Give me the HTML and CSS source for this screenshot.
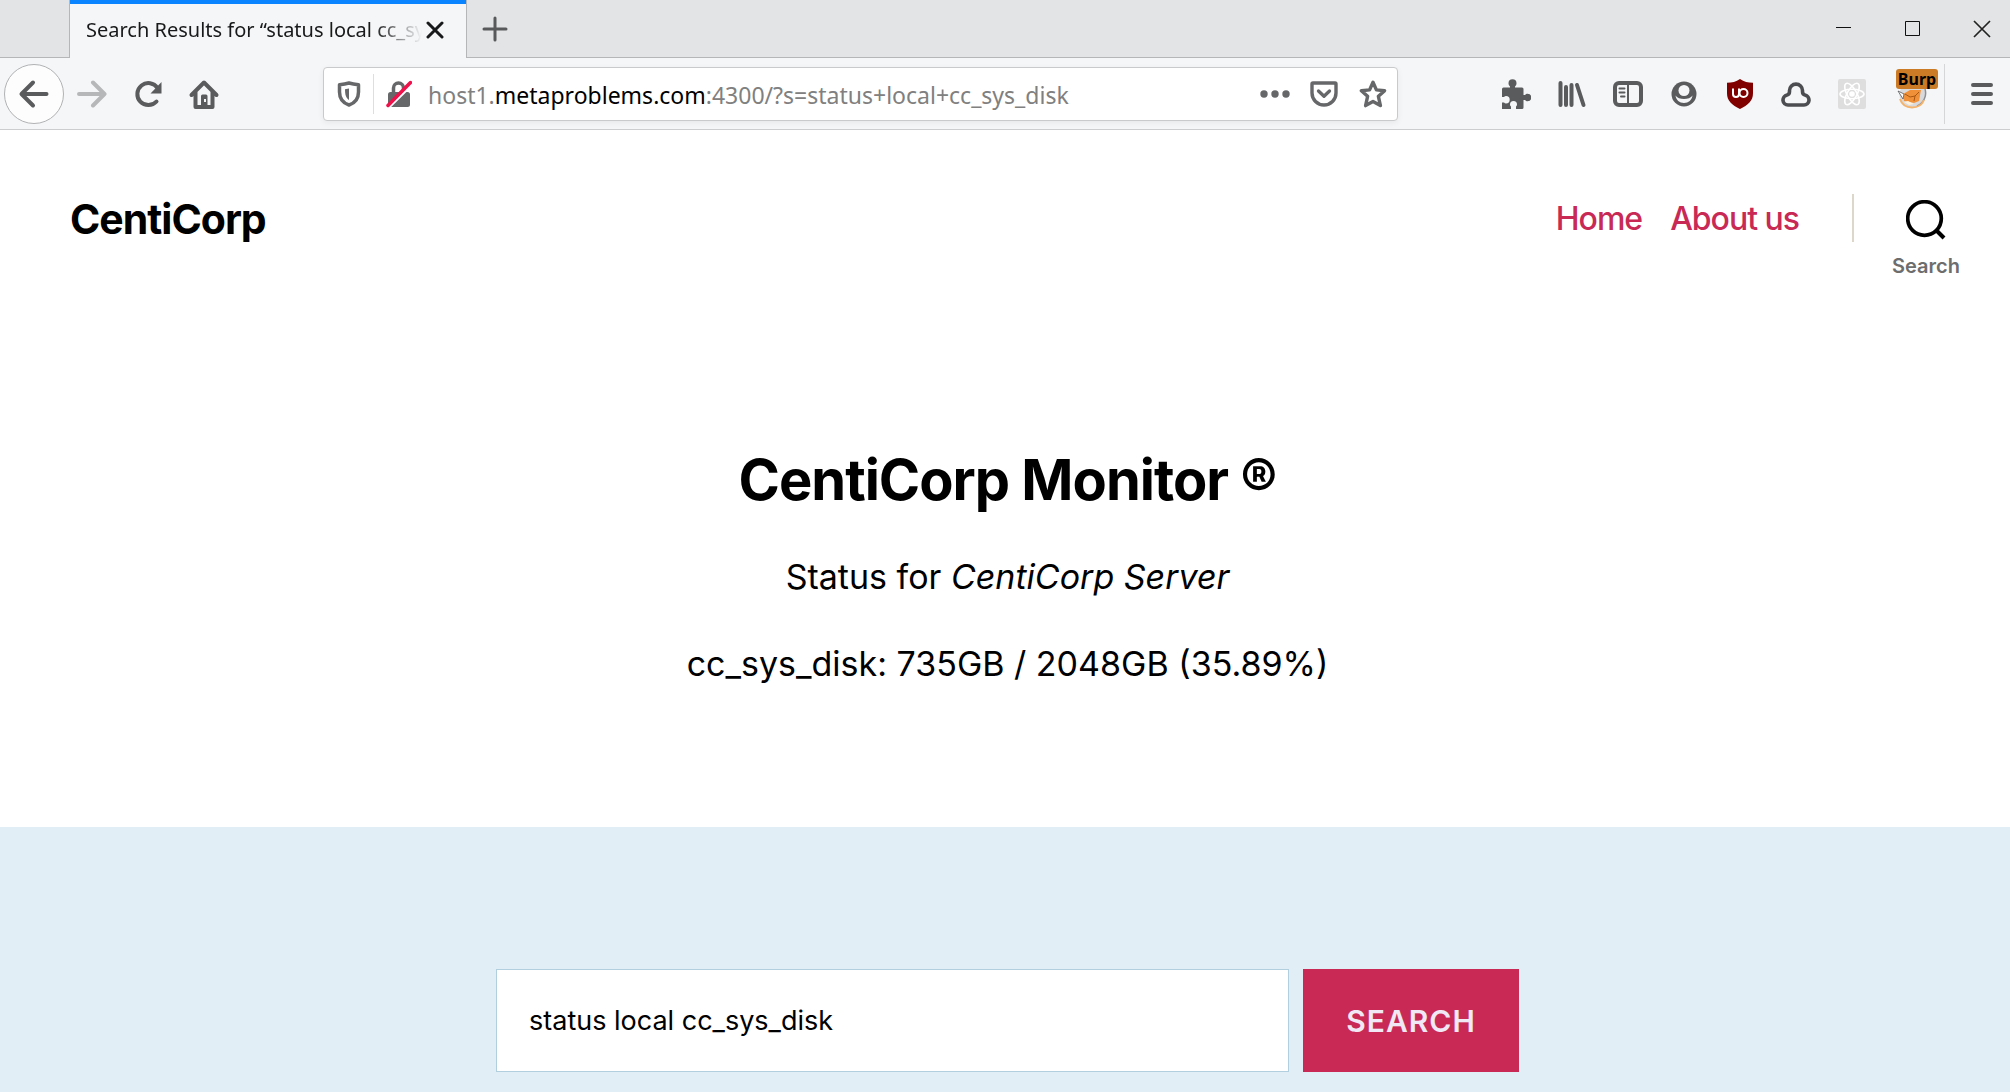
FILE: index.html
```html
<!DOCTYPE html>
<html lang="en">
<head>
<meta charset="utf-8">
<title>Search Results for “status local cc_sys_disk”</title>
<link rel="stylesheet" href="styles.css">
</head>
<body>
<div class="browser">
  <div class="tabstrip">
    <div class="tab">
      <span class="tab-title">Search Results for “status local cc_sy</span>
      <button class="tab-close" aria-label="Close tab"><svg width="18" height="18" viewBox="0 0 18 18"><path d="M2 2l14 14M16 2L2 16" stroke="#18191a" stroke-width="3" stroke-linecap="round"/></svg></button>
    </div>
    <button class="new-tab" aria-label="New tab"><svg width="26" height="26" viewBox="0 0 26 26"><path d="M13 2v22M2 13h22" stroke="#58595b" stroke-width="3" stroke-linecap="round"/></svg></button>
    <div class="window-controls">
      <button aria-label="Minimize"><svg width="16" height="16" viewBox="0 0 16 16"><path d="M0 6.500h15" stroke="#111"/></svg></button>
      <button aria-label="Maximize"><svg width="16" height="16" viewBox="0 0 16 16"><path d="M.5 .5h14v14H.5z" fill="none" stroke="#111"/></svg></button>
      <button aria-label="Close"><svg width="18" height="18" viewBox="0 0 18 18"><path d="M1 1l16 16M17 1L1 17" stroke="#222" stroke-width="1.700"/></svg></button>
    </div>
  </div>

  <div class="toolbar">
    <button class="back" aria-label="Back"><svg width="32" height="32" viewBox="0 0 32 32"><path d="M28.500 16H4M15 4.500L3.500 16L15 27.500" class="line"/></svg></button>
    <button class="tool faded" aria-label="Forward"><svg width="32" height="32" viewBox="0 0 32 32"><path d="M3 16h25M17 4.500L28.500 16L17 27.500" class="line"/></svg></button>
    <button class="tool" aria-label="Reload"><svg width="32" height="32" viewBox="0 0 32 32"><path d="M24.500 23.500A11 11 0 1 1 25.500 10" class="line"/><path d="M29.500 4v11.500H18.500z" class="solid"/></svg></button>
    <button class="tool" aria-label="Home"><svg width="32" height="32" viewBox="0 0 32 32"><path d="M3.500 17L16 4.500L28.500 17M7.500 14v15h17V14" class="line"/><path d="M13 29v-11a1.500 1.500 0 0 1 1.500-1.500h3.500a1.500 1.500 0 0 1 1.500 1.500v11z" class="solid"/><path d="M16 21h2v3h-2z" fill="#f5f6f7"/></svg></button>

    <div class="urlbar">
      <button class="url-icon shield" aria-label="Tracking protection"><svg width="24" height="26" viewBox="0 0 24 26"><path d="M12 2C8.500 3 5.500 3.400 2.500 3.700V11c0 6 3.500 11 9.500 13 6-2 9.500-7 9.500-13V3.700C18.500 3.400 15.500 3 12 2z" fill="none" stroke="#666769" stroke-width="3.500" stroke-linejoin="round"/><path d="M12 7.500v11.500c-3-2-4-5-4-10.800z" fill="#666769"/></svg></button>
      <button class="url-icon lock" aria-label="Connection is not secure"><svg width="26" height="28" viewBox="0 0 26 28"><path d="M7.500 13V8a5 5 0 0 1 10 0v5" fill="none" stroke="#666769" stroke-width="3.500"/><rect x="2" y="12" width="22" height="15" rx="2.500" fill="#666769"/><path d="M1.500 28.500L26.500 4" stroke="#fff" stroke-width="3"/><path d="M2 25.500L24.500 2.500" stroke="#f0104a" stroke-width="3.500" stroke-linecap="round"/></svg></button>
      <div class="url" role="textbox" aria-label="Address"><span>host1.</span><b>metaproblems.com</b><span>:4300/?s=status+local+cc_sys_disk</span></div>
      <div class="url-actions">
        <button aria-label="Page actions"><svg width="30" height="8" viewBox="0 0 30 8"><g fill="#666769"><circle cx="4" cy="4" r="3.700"/><circle cx="15" cy="4" r="3.700"/><circle cx="26" cy="4" r="3.700"/></g></svg></button>
        <button aria-label="Save to Pocket"><svg width="28" height="26" viewBox="0 0 28 26"><path d="M3 2h22a1 1 0 0 1 1 1v9a12 12 0 0 1-24 0V3a1 1 0 0 1 1-1z" fill="none" stroke="#666769" stroke-width="3.400"/><path d="M8.500 10l5.500 5.300L19.500 10" fill="none" stroke="#666769" stroke-width="3.300" stroke-linecap="round" stroke-linejoin="round"/></svg></button>
        <button aria-label="Bookmark this page"><svg width="28" height="28" viewBox="0 0 28 28"><path d="M14 2.300l3.400 7.600 8.200.8-6.200 5.600 2 9.300L14 21.500l-7.400 4.100 2-9.300L2.400 10.700l8.200-.8z" fill="none" stroke="#666769" stroke-width="3.400" stroke-linejoin="round"/></svg></button>
      </div>
    </div>

    <button class="tool" aria-label="Extensions"><svg width="30" height="30" viewBox="0 0 30 30"><path d="M1 10a1.500 1.500 0 0 1 1.500-1.500H9V7.500C8 6.500 7.500 5.500 7.500 4.200a4 4 0 0 1 8 0c0 1.300-.5 2.300-1.500 3.300v1h7A1.500 1.500 0 0 1 22.500 10v6h1.500c.8-.9 1.500-1.300 2.500-1.300a3.800 3.800 0 0 1 0 7.600c-1 0-1.700-.4-2.500-1.300h-1.500v7.500A1.500 1.500 0 0 1 21 30h-6v-2.500c.8-.6 1-1.200 1-2a3.500 3.500 0 0 0-7 0c0 .8.200 1.400 1 2V30H1v-6.500h2c.6.700 1.200 1 2 1a3.700 3.700 0 0 0 0-7.400c-.8 0-1.400.3-2 1H1z" class="solid"/></svg></button>
    <button class="tool" aria-label="Library"><svg width="30" height="30" viewBox="0 0 30 30"><path d="M3.500 4v22M9 8v18M14.500 6v20M20 6l6.500 20" class="line"/></svg></button>
    <button class="tool" aria-label="Sidebars"><svg width="30" height="30" viewBox="0 0 30 30"><rect x="2" y="4" width="26" height="22" rx="4" class="line"/><path d="M15 4v22" stroke="#5a5b5d" stroke-width="2"/><path d="M6.500 9.500h5M6.500 13.500h5M8 17.500h3.500" stroke="#5a5b5d" stroke-width="2" stroke-linecap="round"/></svg></button>
    <button class="tool" aria-label="Account"><svg width="26" height="26" viewBox="0 0 26 26"><circle cx="13" cy="13" r="12.500" class="solid"/><circle cx="13" cy="9.500" r="5.500" fill="#f5f6f7"/><path d="M4.500 14.500c1.500 2.500 5 3.500 8.500 3.500s7-1 8.500-3.500c-.5 4.500-4 7.500-8.500 7.500s-8-3-8.500-7.500z" fill="#f5f6f7"/></svg></button>
    <button class="tool" aria-label="uBlock Origin"><svg width="28" height="30" viewBox="0 0 28 30"><path d="M14 0c4 3 8 3.600 13 3.800v10.500C27 22 22 26 14 30 6 26 1 22 1 14.300V3.800C6 3.600 10 3 14 0z" fill="#800000"/><path d="M7 9.500v5.500a3 3 0 0 0 6 0V9.500" fill="none" stroke="#fff" stroke-width="2"/><circle cx="17.500" cy="14" r="4" fill="none" stroke="#fff" stroke-width="2"/></svg></button>
    <button class="tool" aria-label="Cloud"><svg width="30" height="28" viewBox="0 0 30 28"><path d="M7 25a5 5 0 0 1-1-9.900c1.500-.4 2.500-1.500 2.500-3.500v-1a6.500 6.500 0 0 1 13 0v1c0 2 1 3.100 2.500 3.500a5 5 0 0 1-1 9.900z" fill="none" stroke="#4c4d50" stroke-width="3.600"/></svg></button>
    <button class="tool" aria-label="React Developer Tools"><svg width="28" height="30" viewBox="0 0 28 30"><rect width="28" height="30" rx="2" fill="#dedede"/><g transform="translate(14 15)" fill="none" stroke="#fff" stroke-width="1.600"><ellipse rx="12" ry="4.700"/><ellipse rx="12" ry="4.700" transform="rotate(60)"/><ellipse rx="12" ry="4.700" transform="rotate(120)"/><circle r="2" fill="#fff"/></g></svg></button>
    <button class="tool foxy" aria-label="FoxyProxy: Burp">
      <svg width="30" height="30" viewBox="0 0 30 30"><circle cx="15.500" cy="15.500" r="13" fill="#d9d9dc"/><path d="M28 10a14 14 0 0 1-8 17" fill="none" stroke="#8d8e92" stroke-width="1.500"/><path d="M3 20c2 6 7 8.500 12 8.500S25 26 27 21" fill="none" stroke="#f4b36c" stroke-width="2"/><path d="M6 15l7-4h11l-2 11-5 2-10-2z" fill="#f0913a"/><path d="M1 12l6 3-1 5z" fill="#fff" stroke="#55565a" stroke-width=".8"/><path d="M8 15l5 3 5-1 4-4M18 17l-1 5" fill="none" stroke="#a95610"/><path d="M7 23l4-1 6 3-5 1z" fill="#fff0d8"/></svg>
      <span class="badge">Burp</span>
    </button>
    <button class="menu" aria-label="Open menu"><svg width="24" height="26" viewBox="0 0 24 26"><path d="M3 4h18M3 13h18M3 22h18" class="line"/></svg></button>
  </div>
</div>

<header class="site-header">
  <a class="site-title" href="#">CentiCorp</a>
  <nav class="site-nav">
    <a href="#">Home</a>
    <a href="#">About us</a>
  </nav>
  <button class="search-toggle">
    <svg width="40" height="40" viewBox="0 0 40 40"><circle cx="18.500" cy="18.500" r="16.800" fill="none" stroke="#000" stroke-width="3.700"/><path d="M30 30l8 8" stroke="#000" stroke-width="4"/></svg>
    <span>Search</span>
  </button>
</header>

<main>
  <section class="status">
    <h1>CentiCorp Monitor ®</h1>
    <p>Status for <em>CentiCorp Server</em></p>
    <p>cc_sys_disk: 735GB / 2048GB (35.89%)</p>
  </section>
  <section class="search-area">
    <form class="search-form">
      <input type="search" aria-label="Search for" value="status local cc_sys_disk">
      <button type="button">SEARCH</button>
    </form>
  </section>
</main>
</body>
</html>
```
FILE: styles.css
```css
* { box-sizing: border-box; }

body {
  margin: 0;
  background: #fff;
  color: #000;
  font-family: Inter, "Liberation Sans", sans-serif;
}

button {
  display: flex;
  align-items: center;
  justify-content: center;
  padding: 0;
  border: 0;
  background: none;
  color: inherit;
  font: inherit;
}

svg { display: block; flex: none; }
.line { fill: none; stroke: #5a5b5d; stroke-width: 4; stroke-linecap: round; stroke-linejoin: round; }
.solid { fill: #5a5b5d; }

/* Browser window */
.browser { font-family: "Noto Sans", "Open Sans", sans-serif; }

.tabstrip {
  display: flex;
  height: 58px;
  padding-left: 69px;
  background: #e3e4e6;
  box-shadow: inset 0 -1px #b5b6b8;
}
.tab {
  display: flex;
  align-items: center;
  width: 398px;
  padding: 2px 22px 0 16px;
  border: solid #b5b6b8;
  border-width: 0 1px;
  background: linear-gradient(#0a84ff 4px, #f5f6f7 4px);
}
.tab-title {
  flex: 1;
  white-space: nowrap;
  font-size: 20px;
  line-height: 32px;
  color: #18191a;
  -webkit-mask-image: linear-gradient(to left, transparent 4px, #000 52px);
  mask-image: linear-gradient(to left, transparent 4px, #000 52px);
}
.new-tab { width: 56px; }
.window-controls { display: flex; margin-left: auto; }
.window-controls button { width: 69px; padding-left: 12px; }

.toolbar {
  display: flex;
  align-items: center;
  height: 72px;
  padding-left: 4px;
  border-bottom: 1px solid #cccdcf;
  background: #f5f6f7;
}
.back {
  width: 60px;
  height: 60px;
  border: 1px solid #b1b2b4;
  border-radius: 50%;
  background: #fdfdfd;
}
.tool { flex: none; width: 56px; height: 56px; }
.faded { opacity: .4; }
.urlbar {
  display: flex;
  flex: 1;
  align-items: center;
  min-width: 0;
  height: 54px;
  margin: 0 90px 0 91px;
  border: 1px solid #c9cacc;
  border-radius: 4px;
  background: #fff;
  box-shadow: 0 2px 6px rgba(0, 0, 0, .06);
}
.url-icon { height: 40px; width: 50px; }
.shield { border-right: 1px solid #dedede; }
.url {
  flex: 1;
  min-width: 0;
  padding: 2px 0 0 4px;
  white-space: nowrap;
  font-size: 23px;
  line-height: 36px;
  color: #808080;
}
.url b { font-weight: 400; color: #000; }
.url-actions { display: flex; }
.url-actions button { width: 49px; height: 40px; }
.foxy { position: relative; width: 64px; }
.badge {
  position: absolute;
  top: 3px;
  left: 16px;
  width: 42px;
  border-radius: 3px;
  background: #cb7b25;
  color: #000;
  font-size: 16px;
  font-weight: 700;
  line-height: 20px;
  text-align: center;
}
.menu {
  width: 66px;
  height: 60px;
  padding-left: 8px;
  border-left: 1px solid #d5d6d8;
}

/* Site header */
.site-header {
  display: flex;
  align-items: flex-start;
  padding: 64px 50px 56px 70px;
}
.site-title {
  margin-right: auto;
  font-size: 41px;
  font-weight: 700;
  line-height: 50px;
  letter-spacing: -1px;
  color: #000;
  text-decoration: none;
}
.site-nav { display: flex; gap: 28px; padding-right: 53px; border-right: 2px solid #dcd7ca; }
.site-nav a {
  padding-top: 2px;
  font-size: 32px;
  font-weight: 500;
  line-height: 46px;
  letter-spacing: -1px;
  color: #c82a55;
  text-decoration: none;
}
.search-toggle {
  flex-direction: column;
  gap: 12px;
  margin: 6px 0 0 38px;
  font-size: 20px;
  font-weight: 600;
  line-height: 28px;
  color: #6d6d6d;
}

/* Status report */
.status { padding: 109px 0 138px 5px; text-align: center; }
.status h1 {
  margin: 0;
  font-size: 56px;
  font-weight: 700;
  line-height: 70px;
  letter-spacing: -1px;
}
.status p { margin: 37px 0 0; font-size: 34px; line-height: 50px; }

/* Search form */
.search-area { padding: 142px 0 20px 5px; background: #e1eef6; }
.search-form {
  display: flex;
  gap: 14px;
  max-width: 1023px;
  margin: 0 auto;
}
.search-form input {
  flex: 1;
  min-width: 0;
  height: 103px;
  padding: 0 32px;
  border: 1px solid #b2cfe0;
  border-radius: 0;
  outline: 0;
  background: #fff;
  color: #000;
  font-family: inherit;
  font-size: 27px;
  appearance: none;
}
.search-form button {
  width: 216px;
  background: #c82a55;
  color: #f0e8f5;
  font-size: 30px;
  font-weight: 600;
  letter-spacing: 1px;
}
```
